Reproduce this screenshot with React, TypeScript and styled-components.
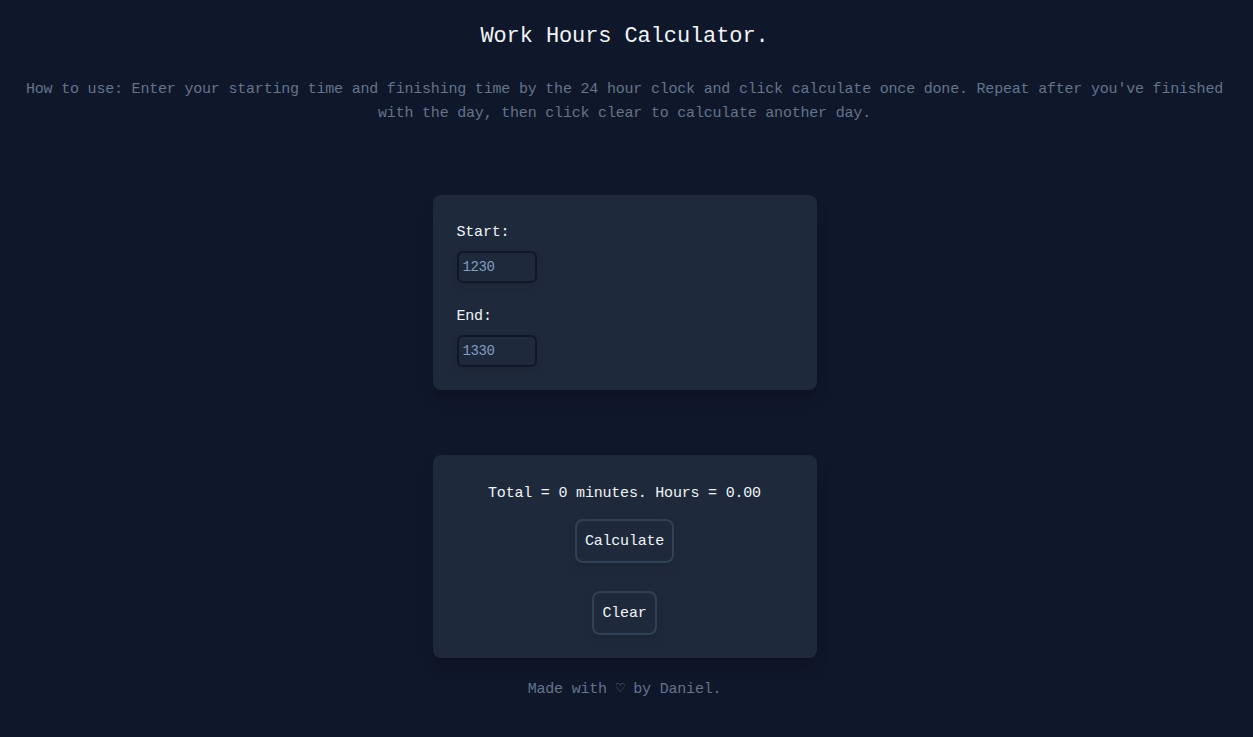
import React, { useState } from "react";
import styled, { createGlobalStyle } from "styled-components";

const GlobalStyle = createGlobalStyle`
  html, body {
    margin: 0;
    padding: 0;
    background: #0f172a;
  }
  body {
    font-family: "Liberation Mono", "DejaVu Sans Mono", monospace;
    color: #e2e8f0;
  }
`;

const Page = styled.main`
  min-height: 737px;
  display: flex;
  flex-direction: column;
  align-items: center;
  padding: 22px 27px 0 23px;
  box-sizing: border-box;
`;

const Title = styled.h1`
  margin: 0;
  font-size: 22px;
  letter-spacing: -0.1px;
  line-height: 30px;
  font-weight: 400;
  color: #f1f5f9;
`;

const Intro = styled.p`
  margin: 26px 0 0;
  font-size: 15px;
  letter-spacing: -0.2px;
  line-height: 24px;
  text-align: center;
  color: #64748b;
`;

const Card = styled.section<{ $align?: "start" | "center"; $top: number }>`
  width: 384px;
  box-sizing: border-box;
  margin-top: ${(p) => p.$top}px;
  padding: 24px 24px 23px;
  background: #1e293b;
  border-radius: 8px;
  box-shadow: 0 10px 15px -3px rgba(0, 0, 0, 0.15), 0 4px 6px -4px rgba(0, 0, 0, 0.15);
  display: flex;
  flex-direction: column;
  align-items: ${(p) => (p.$align === "center" ? "center" : "flex-start")};
`;

const Label = styled.label<{ $gapTop?: number }>`
  display: block;
  margin-top: ${(p) => p.$gapTop ?? 0}px;
  margin-bottom: -2px;
  padding-top: 2px;
  font-size: 15px;
  letter-spacing: -0.2px;
  line-height: 24px;
  color: #f1f5f9;
`;

const TimeInput = styled.input`
  margin-top: 8px;
  width: 80px;
  height: 32px;
  box-sizing: border-box;
  padding: 0 4px;
  background: #1e293b;
  border: 2px solid #0f172a;
  border-radius: 6px;
  font-family: "Liberation Mono", "DejaVu Sans Mono", monospace;
  font-size: 14px;
  letter-spacing: -0.4px;
  color: #94a3b8;
  outline: none;
  box-shadow: 0 4px 8px rgba(0, 0, 0, 0.08);
  &::placeholder {
    color: #819dc0;
  }
`;

const Result = styled.div`
  margin-bottom: -3px;
  padding-top: 3px;
  font-size: 15px;
  letter-spacing: -0.2px;
  line-height: 24px;
  color: #f1f5f9;
`;

const Button = styled.button<{ $gapTop: number }>`
  margin-top: ${(p) => p.$gapTop}px;
  height: 44px;
  box-sizing: border-box;
  padding: 1px 8px 0;
  background: #1e293b;
  border: 2px solid #334155;
  border-radius: 8px;
  font-family: "Liberation Mono", "DejaVu Sans Mono", monospace;
  font-size: 15px;
  letter-spacing: -0.2px;
  color: #f1f5f9;
  cursor: pointer;
  box-shadow: 0 6px 10px rgba(0, 0, 0, 0.08);
`;

const Footer = styled.footer`
  margin-top: 20px;
  font-size: 15px;
  letter-spacing: -0.2px;
  line-height: 24px;
  color: #64748b;
`;

function toMinutes(v: string): number | null {
  const s = v.padStart(4, "0");
  if (!/^\d{4}$/.test(s)) return null;
  return parseInt(s.slice(0, 2), 10) * 60 + parseInt(s.slice(2), 10);
}

export default function App() {
  const [start, setStart] = useState("");
  const [end, setEnd] = useState("");
  const [total, setTotal] = useState(0);

  const calculate = () => {
    const a = toMinutes(start);
    const b = toMinutes(end);
    if (a === null || b === null) return;
    setTotal((t) => t + Math.max(0, b - a));
    setStart("");
    setEnd("");
  };

  const clear = () => {
    setTotal(0);
    setStart("");
    setEnd("");
  };

  return (
    <>
      <GlobalStyle />
      <Page>
        <Title>Work Hours Calculator.</Title>
        <Intro>
          How to use: Enter your starting time and finishing time by the 24 hour clock and click
          calculate once done. Repeat after you've finished with the day, then click clear to
          calculate another day.
        </Intro>
        <Card $top={69}>
          <Label htmlFor="start">Start:</Label>
          <TimeInput id="start" placeholder="1230" value={start} onChange={(e) => setStart(e.target.value)} />
          <Label htmlFor="end" $gapTop={20}>End:</Label>
          <TimeInput id="end" placeholder="1330" value={end} onChange={(e) => setEnd(e.target.value)} />
        </Card>
        <Card $top={65} $align="center">
          <Result>
            Total = {total} minutes. Hours = {(total / 60).toFixed(2)}
          </Result>
          <Button $gapTop={16} onClick={calculate}>Calculate</Button>
          <Button $gapTop={28} onClick={clear}>Clear</Button>
        </Card>
        <Footer>Made with ♡ by Daniel.</Footer>
      </Page>
    </>
  );
}
